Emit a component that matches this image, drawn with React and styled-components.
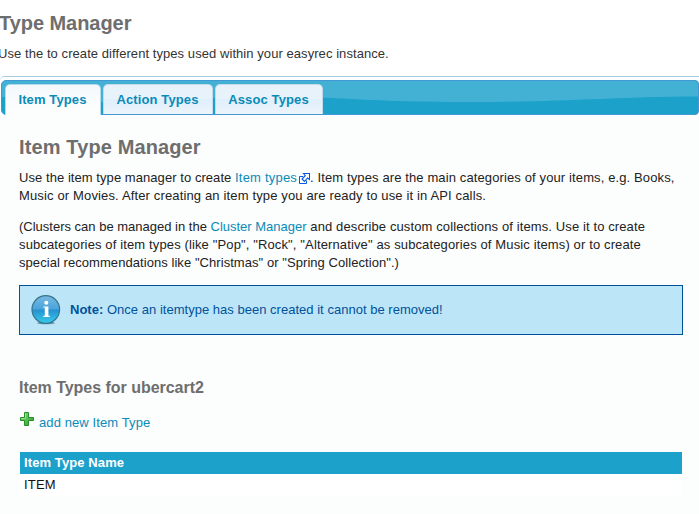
import React from "react";
import styled, { createGlobalStyle } from "styled-components";

const GlobalStyle = createGlobalStyle`
  html, body { margin: 0; padding: 0; background: #fff; overflow: hidden; }
  * { box-sizing: border-box; }
  body { font: 13px/18px "Liberation Sans", Arial, sans-serif; color: #222; }
`;

const Page = styled.div`
  width: 699px;
  height: 514px;
  overflow: hidden;
  display: flex;
  flex-direction: column;
`;

const Header = styled.header`
  height: 76px;
  padding-top: 11px;
  color: #333;
`;

const Heading = styled.h1`
  margin: 0 0 0 ${(p) => p.$shift || 0}px;
  font-size: 20px;
  line-height: 24px;
  font-weight: bold;
  letter-spacing: ${(p) => p.$spacing || 0}px;
  color: #6e6e6e;
  white-space: nowrap;
`;

const Line = styled.span`
  display: block;
  height: 18px;
  white-space: nowrap;
  letter-spacing: ${(p) => p.$spacing || 0}px;
`;

const Run = styled.span`
  letter-spacing: ${(p) => p.$spacing || 0}px;
`;

const Intro = styled.div`
  margin: 10px 0 0 -2px;
`;

const Widget = styled.main`
  flex: 1;
  border-top: 1px solid #a6c9e2;
  border-top-left-radius: 5px;
  background: #fcfdfd;
  display: flex;
  flex-direction: column;
`;

const TabBar = styled.nav`
  height: 38px;
  padding: 3px 0 0 1px;
  background: #fff;
  border-top-left-radius: 5px;
`;

const TabStrip = styled.div`
  position: relative;
  height: 35px;
  border: 1px solid #4297d7;
  border-radius: 5px 4px 4px 5px;
  background: #1ba1ca;
`;

const Wave = styled.svg`
  position: absolute;
  inset: 0;
  width: 100%;
  height: 100%;
  border-radius: 4px;
`;

const Tabs = styled.div`
  position: relative;
  display: flex;
  gap: 2px;
  padding: 3px 0 0 3px;
`;

const Tab = styled.a`
  width: ${(p) => p.$width}px;
  height: ${(p) => (p.$active ? 31 : 30)}px;
  padding: 6px 1px 0 0;
  border: 1px solid ${(p) => (p.$active ? "#b5d9ed" : "#c5dbec")};
  border-bottom: 0;
  border-radius: 5px 5px 0 0;
  background: ${(p) =>
    p.$active
      ? "linear-gradient(#f4f8fb, #fcfdfd 75%)"
      : "linear-gradient(#e8f2fb 0 48%, #dfeffc 49%, #edf4fb)"};
  color: #0a8bb8;
  font-weight: bold;
  line-height: 18px;
  text-align: center;
  letter-spacing: 0.12px;
  white-space: nowrap;
`;

const Panel = styled.section`
  padding: 20px 16px 0 19px;
`;

const Paragraph = styled.div`
  margin-top: ${(p) => p.$gap}px;
`;

const Link = styled.a`
  color: #0a8bb8;
  letter-spacing: ${(p) => p.$spacing || 0}px;
`;

const ExternalIcon = styled.svg`
  width: 11px;
  height: 11px;
  margin: 0 0 -2px 2px;
`;

const Note = styled.aside`
  height: 50px;
  margin-top: 13px;
  padding-left: 11px;
  display: flex;
  align-items: center;
  gap: 9px;
  border: 1px solid #00529b;
  background: #bde5f8;
  color: #00529b;
`;

const SubHeading = styled.h2`
  margin: 43px 0 0;
  font-size: 16px;
  line-height: 20px;
  color: #6e6e6e;
  letter-spacing: -0.03px;
`;

const AddLink = styled.a`
  display: flex;
  align-items: flex-start;
  gap: 4px;
  height: 22px;
  margin: 14px 0 18px;
  color: #0a8bb8;
  letter-spacing: 0.1px;
  span { margin-top: 2px; }
`;

const Table = styled.div`
  width: 663px;
  background: #fff;
`;

const TableHead = styled.div`
  height: 22px;
  margin-left: 1px;
  padding: 2px 4px;
  background: #1ba1ca;
  color: #fff;
  font-weight: bold;
  letter-spacing: 0.1px;
`;

const TableRow = styled.div`
  height: 22px;
  padding: 2px 5px;
  color: #111;
  letter-spacing: 0.2px;
`;

function ExternalLinkIcon() {
  return (
    <ExternalIcon viewBox="0 0 11 11" fill="none" stroke="#0757df">
      <path d="M4 3.5H.5v7h7V7.5" />
      <path d="M4.5.5h6v6L8.5 5 5.5 8.5 3 6 6.3 2.7Z" fill="#fff" strokeWidth="1.1" />
    </ExternalIcon>
  );
}

function InfoIcon() {
  return (
    <svg width="30" height="30" viewBox="0 0 30 30">
      <defs>
        <linearGradient id="ball" x1="0" y1="0" x2="0" y2="1">
          <stop offset="0" stopColor="#79b9e2" />
          <stop offset=".48" stopColor="#4aa4dc" />
          <stop offset=".52" stopColor="#2690d1" />
          <stop offset="1" stopColor="#36cdea" />
        </linearGradient>
      </defs>
      <ellipse cx="15" cy="28" rx="9" ry="1.3" fill="#6099a8" />
      <circle cx="14.8" cy="14.5" r="13.8" fill="url(#ball)" stroke="#35758d" strokeWidth="1.2" />
      <circle cx="15.3" cy="7.8" r="2" fill="#fff" />
      <path d="M12.4 11.4h5v9.4h1.4V22h-6.5v-1.2h1.5v-8.2h-1.4Z" fill="#fff" />
    </svg>
  );
}

function PlusIcon() {
  return (
    <svg width="16" height="15" viewBox="0 0 16 15">
      <defs>
        <linearGradient id="plus" x1="0" y1="0" x2="1" y2="1">
          <stop offset="0" stopColor="#8be27f" />
          <stop offset="1" stopColor="#249a28" />
        </linearGradient>
      </defs>
      <path d="M5.5.5h4v5h5v3h-5v5h-4v-5h-4v-3h4Z" fill="url(#plus)" stroke="#268f2a" strokeLinejoin="round" />
      <path d="M6.5 1.5v5h-4" fill="none" stroke="#b0efa6" strokeOpacity=".6" />
    </svg>
  );
}

export default function App() {
  return (
    <>
      <GlobalStyle />
      <Page>
        <Header>
          <Heading $shift={-1} $spacing={-0.05}>Type Manager</Heading>
          <Intro>
            <Line $spacing={0.065}>Use the to create different types used within your easyrec instance.</Line>
          </Intro>
        </Header>
        <Widget>
          <TabBar>
            <TabStrip>
              <Wave viewBox="0 0 697 33" preserveAspectRatio="none">
                <path d="M0 0H697V15.5C610 16 560 21 475 21C400 21 370 19 320 16.5C230 13 170 21 90 21C50 21 30 17 0 16Z" fill="#43b1d4" />
              </Wave>
              <Tabs>
                <Tab $active $width={96}>Item Types</Tab>
                <Tab $width={110}>Action Types</Tab>
                <Tab $width={108}>Assoc Types</Tab>
              </Tabs>
            </TabStrip>
          </TabBar>
          <Panel>
            <Heading $spacing={0.12}>Item Type Manager</Heading>
            <Paragraph $gap={10}>
              <Line $spacing={0.12}>
                <Run $spacing={0.06}>Use the item type manager to create </Run>
                <Link $spacing={0.2}>Item types</Link>
                <ExternalLinkIcon />. Item types are the main categories of your items, e.g. Books,
              </Line>
              <Line $spacing={0.145}>Music or Movies. After creating an item type you are ready to use it in API calls.</Line>
            </Paragraph>
            <Paragraph $gap={13}>
              <Line $spacing={0.115}>
                <Run>(Clusters can be managed in the </Run>
                <Link>Cluster Manager</Link> and describe custom collections of items. Use it to create
              </Line>
              <Line $spacing={0.13}>subcategories of item types (like "Pop", "Rock", "Alternative" as subcategories of Music items) or to create</Line>
              <Line $spacing={0.06}>special recommendations like "Christmas" or "Spring Collection".)</Line>
            </Paragraph>
            <Note>
              <InfoIcon />
              <Line $spacing={0.02}><b>Note:</b> Once an itemtype has been created it cannot be removed!</Line>
            </Note>
            <SubHeading>Item Types for ubercart2</SubHeading>
            <AddLink>
              <PlusIcon />
              <span>add new Item Type</span>
            </AddLink>
            <Table>
              <TableHead>Item Type Name</TableHead>
              <TableRow>ITEM</TableRow>
            </Table>
          </Panel>
        </Widget>
      </Page>
    </>
  );
}
